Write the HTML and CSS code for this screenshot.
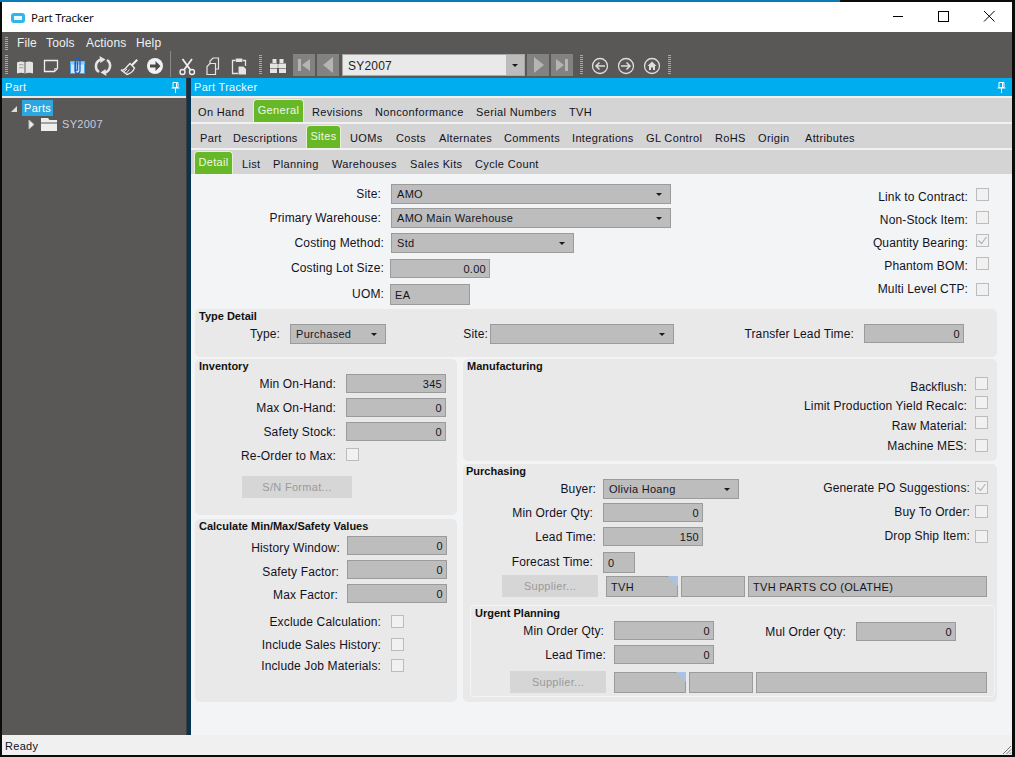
FILE: index.html
```html
<!DOCTYPE html>
<html lang="en">
<head>
<meta charset="utf-8">
<title>Part Tracker</title>
<link rel="stylesheet" href="styles.css">
</head>
<body>
<div class="window">
  <header class="titlebar">
    <span class="app-icon"></span>
    <span class="title-text">Part Tracker</span>
    <span class="win-btns">
      <svg class="win-btn" width="46" height="30" viewBox="0 0 46 30"><path d="M18 14.500h10" stroke="#000" fill="none"/></svg>
      <svg class="win-btn" width="46" height="30" viewBox="0 0 46 30"><rect x="17.500" y="9.500" width="10" height="10" stroke="#000" fill="none"/></svg>
      <svg class="win-btn" width="46" height="30" viewBox="0 0 46 30"><path d="M17 9l10.500 10.500M27.500 9L17 19.500" stroke="#000" fill="none"/></svg>
    </span>
  </header>

  <nav class="menubar">
    <span class="grip grip-menu"></span>
    <span class="menu-item m-file">File</span>
    <span class="menu-item m-tools">Tools</span>
    <span class="menu-item m-actions">Actions</span>
    <span class="menu-item m-help">Help</span>
  </nav>

  <div class="toolbar">
    <span class="grip"></span>
    <div class="tools tools-first">
      <svg class="tool" width="26" height="28" viewBox="0 0 26 28"><path d="M5 11.500q4-2 8 0q4-2 8 0v11q-4-1.500-8 0q-4-1.500-8 0z" fill="#e4e4e4"/><path d="M13 11.500v11" stroke="#595856"/><path d="M7 14q3-1 4.500 0M7 17q3-1 4.500 0" stroke="#999" fill="none"/></svg>
      <svg class="tool" width="26" height="28" viewBox="0 0 26 28"><path d="M6.500 9.500h13v8l-3 3h-10z" fill="none" stroke="#eee" stroke-width="1.300"/><path d="M16.500 20.500v-3h3" fill="none" stroke="#ccc"/></svg>
      <svg class="tool" width="26" height="28" viewBox="0 0 26 28"><rect x="6.500" y="10.500" width="14" height="12" fill="#cfe9fb" stroke="#3fa4ee"/><rect x="6.500" y="10.500" width="14" height="3" fill="#8ccaf7"/><path d="M11 11v8.500q0 3 2.500 3t2.500-3V9.500q0-2.500-2.300-2.500t-2.200 2.500v9q0 1 1 1t1-1v-8" fill="none" stroke="#1c5fc4" stroke-width="1.300"/></svg>
      <svg class="tool" width="26" height="28" viewBox="0 0 26 28"><path d="M9 21A7 7 0 0 1 11 8.500M17 9A7 7 0 0 1 15 21.500" fill="none" stroke="#e4e4e4" stroke-width="2.600"/><path d="M9.500 5l6 3.500-5 3.500zM16.500 25l-6-3.500 5-3.500z" fill="#e4e4e4"/></svg>
      <svg class="tool" width="26" height="28" viewBox="0 0 26 28"><path d="M15 13.500L20.500 8l1.500 1.500-5.500 5.500z" fill="#eee"/><path d="M14 12.500l4.500 4.500q-2 5-7.500 6.500L5 19q3 .5 4.500-1.500T14 12.500z" fill="none" stroke="#eee" stroke-width="1.300"/><path d="M8 21l3-3M10.500 22l3-3.500" stroke="#ddd"/></svg>
      <svg class="tool" width="26" height="28" viewBox="0 0 26 28"><circle cx="13" cy="15" r="8" fill="#f2f2f2"/><path d="M8 13.500h5.500V10l5 5-5 5v-3.500H8z" fill="#4a4a48"/></svg>
    </div>
    <span class="tool-sep"></span>
    <div class="tools tools-edit">
      <svg class="tool" width="26" height="28" viewBox="0 0 26 28"><circle cx="8.500" cy="21" r="2.500" fill="none" stroke="#eee" stroke-width="1.400"/><circle cx="18" cy="21" r="2.500" fill="none" stroke="#eee" stroke-width="1.400"/><path d="M10 19L18 8M16.500 19L8.500 8" stroke="#eee" stroke-width="1.800"/></svg>
      <svg class="tool" width="26" height="28" viewBox="0 0 26 28"><path d="M10 13V10l3-3h5.500v11H15" fill="none" stroke="#e4e4e4" stroke-width="1.200"/><path d="M7 15.500l3-3h5.500v11H7z" fill="none" stroke="#e4e4e4" stroke-width="1.200"/></svg>
      <svg class="tool" width="26" height="28" viewBox="0 0 26 28"><path d="M9 9.500H6.500v13H12M17 9.500h2.500V15" fill="none" stroke="#e4e4e4" stroke-width="1.300"/><rect x="9.500" y="7.500" width="7" height="3.500" rx="1" fill="#e4e4e4"/><path d="M12.500 15.500h5l2.500 2.500v5.500h-7.500z" fill="#e4e4e4"/></svg>
    </div>
    <span class="grip grip-find"></span>
    <svg class="tool tool-find" width="26" height="28" viewBox="0 0 26 28"><rect x="7.500" y="8" width="4" height="4" fill="#e4e4e4"/><rect x="14.500" y="8" width="4" height="4" fill="#e4e4e4"/><rect x="5" y="12.500" width="7" height="9.500" fill="#e4e4e4"/><rect x="14" y="12.500" width="7" height="9.500" fill="#e4e4e4"/><rect x="12" y="13" width="2" height="4" fill="#c4c4c4"/><path d="M5 17.500h7M14 17.500h7" stroke="#8a8a88"/></svg>
    <span class="nav-btn"><svg width="22" height="22" viewBox="0 0 22 22"><path d="M5 5h3v12H5zM17 5v12l-8-6z" fill="#b5b5b5"/></svg></span>
    <span class="nav-btn"><svg width="22" height="22" viewBox="0 0 22 22"><path d="M16 3v16L6 11z" fill="#b5b5b5"/></svg></span>
    <div class="combo">
      <span class="combo-text">SY2007</span>
      <span class="combo-drop"><i class="caret"></i></span>
    </div>
    <span class="nav-btn"><svg width="22" height="22" viewBox="0 0 22 22"><path d="M7 3v16l10-8z" fill="#b5b5b5"/></svg></span>
    <span class="nav-btn"><svg width="22" height="22" viewBox="0 0 22 22"><path d="M14 5h3v12h-3zM5 5v12l8-6z" fill="#b5b5b5"/></svg></span>
    <span class="grip grip-nav"></span>
    <div class="tools tools-nav">
      <svg class="tool" width="26" height="28" viewBox="0 0 26 28"><circle cx="13" cy="15" r="7.500" fill="none" stroke="#ddd" stroke-width="1.300"/><path d="M18 15H9M12.500 11.500L9 15l3.500 3.500" fill="none" stroke="#ddd" stroke-width="1.500"/></svg>
      <svg class="tool" width="26" height="28" viewBox="0 0 26 28"><circle cx="13" cy="15" r="7.500" fill="none" stroke="#ddd" stroke-width="1.300"/><path d="M8 15h9M13.500 11.500L17 15l-3.500 3.500" fill="none" stroke="#ddd" stroke-width="1.500"/></svg>
      <svg class="tool" width="26" height="28" viewBox="0 0 26 28"><circle cx="13" cy="15" r="7.500" fill="none" stroke="#ddd" stroke-width="1.300"/><path d="M8.500 15l4.500-4.500 4.500 4.500H16v4h-2v-2.500h-2V19h-2v-4z" fill="#ddd"/></svg>
    </div>
    <span class="grip grip-end"></span>
  </div>

  <div class="panes">
    <aside class="side">
      <div class="pane-head">
        <span>Part</span>
        <svg class="pin" width="9" height="11" viewBox="0 0 9 11"><path d="M2 .5h5v5H2zM.5 6h8M4.500 6v5M5.500 1v4" stroke="#fff" fill="none"/></svg>
      </div>
      <div class="side-rule"></div>
      <div class="tree">
        <div class="tree-row tree-root">
          <svg class="tw" width="8" height="8" viewBox="0 0 8 8"><path d="M7 1v6H1z" fill="#ddd"/></svg>
          <span class="tree-sel">Parts</span>
        </div>
        <div class="tree-row tree-child">
          <svg class="tw" width="7" height="11" viewBox="0 0 7 11"><path d="M1 1l5 4.500-5 4.500z" fill="#eee" stroke="#bbb"/></svg>
          <svg class="folder" width="16" height="13" viewBox="0 0 16 13"><path d="M0 0h7l1.500 2H16v2.500H0zM0 5.500h16V13H0z" fill="#eee"/></svg>
          <span class="tree-label">SY2007</span>
        </div>
      </div>
    </aside>
    <div class="splitter"></div>
    <main class="main">
      <div class="pane-head">
        <span>Part Tracker</span>
        <svg class="pin" width="9" height="11" viewBox="0 0 9 11"><path d="M2 .5h5v5H2zM.5 6h8M4.500 6v5M5.500 1v4" stroke="#fff" fill="none"/></svg>
      </div>
      <div class="tabs tabs-1">
        <span class="tab">On Hand</span><span class="tab tab-on tab-general">General</span><span class="tab">Revisions</span><span class="tab">Nonconformance</span><span class="tab">Serial Numbers</span><span class="tab">TVH</span>
      </div>
      <div class="tabs tabs-2">
        <span class="tab">Part</span><span class="tab">Descriptions</span><span class="tab tab-on tab-sites">Sites</span><span class="tab">UOMs</span><span class="tab">Costs</span><span class="tab">Alternates</span><span class="tab">Comments</span><span class="tab">Integrations</span><span class="tab">GL Control</span><span class="tab">RoHS</span><span class="tab">Origin</span><span class="tab">Attributes</span>
      </div>
      <div class="tabs tabs-3">
        <span class="tab tab-on tab-detail">Detail</span><span class="tab">List</span><span class="tab">Planning</span><span class="tab">Warehouses</span><span class="tab">Sales Kits</span><span class="tab">Cycle Count</span>
      </div>

      <section class="form">
        <div class="top">
          <div class="stack top-fields">
            <div class="row"><label class="lbl w190 gap10">Site:</label><span class="field select w280"><span>AMO</span><i class="caret"></i></span></div>
            <div class="row"><label class="lbl w190 gap10">Primary Warehouse:</label><span class="field select w280"><span>AMO Main Warehouse</span><i class="caret"></i></span></div>
            <div class="row"><label class="lbl w193 gap7">Costing Method:</label><span class="field select w183"><span>Std</span><i class="caret"></i></span></div>
            <div class="row"><label class="lbl w193 gap6 lot">Costing Lot Size:</label><span class="field num w100">0.00</span></div>
            <div class="row"><label class="lbl w193 gap6">UOM:</label><span class="field code w80">EA</span></div>
          </div>
          <div class="stack top-checks">
            <div class="row end"><label class="lbl-c">Link to Contract:</label><span class="check"></span></div>
            <div class="row end"><label class="lbl-c">Non-Stock Item:</label><span class="check"></span></div>
            <div class="row end"><label class="lbl-c">Quantity Bearing:</label><span class="check checked"><svg width="11" height="11" viewBox="0 0 11 11"><path d="M1.500 5.500l3 3 5-6.500" stroke="#b5b5b5" fill="none" stroke-width="1.200"/></svg></span></div>
            <div class="row end"><label class="lbl-c">Phantom BOM:</label><span class="check"></span></div>
            <div class="row end"><label class="lbl-c lbl-up">Multi Level CTP:</label><span class="check"></span></div>
          </div>
        </div>

        <div class="group type-group">
          <h3 class="g-title">Type Detail</h3>
          <div class="row">
            <label class="lbl w85 gap10">Type:</label><span class="field select w96"><span>Purchased</span><i class="caret"></i></span>
            <label class="lbl w102 gap2">Site:</label><span class="field select w184"><span></span><i class="caret"></i></span>
            <label class="lbl w180 gap10">Transfer Lead Time:</label><span class="field num w100">0</span>
          </div>
        </div>

        <div class="split">
          <div class="col-left">
            <div class="group inv-group">
              <h3 class="g-title">Inventory</h3>
              <div class="stack inv-rows">
                <div class="row"><label class="lbl w141 gap10">Min On-Hand:</label><span class="field num w100">345</span></div>
                <div class="row"><label class="lbl w141 gap10">Max On-Hand:</label><span class="field num w100">0</span></div>
                <div class="row"><label class="lbl w141 gap10">Safety Stock:</label><span class="field num w100">0</span></div>
                <div class="row"><label class="lbl w141 gap10 for-check">Re-Order to Max:</label><span class="check"></span></div>
                <div class="row"><button class="btn btn-sn" disabled>S/N Format...</button></div>
              </div>
            </div>
            <div class="group calc-group">
              <h3 class="g-title">Calculate Min/Max/Safety Values</h3>
              <div class="stack calc-rows">
                <div class="row"><label class="lbl w145 gap7 low">History Window:</label><span class="field num w100">0</span></div>
                <div class="row"><label class="lbl w144 gap8 low">Safety Factor:</label><span class="field num w100">0</span></div>
                <div class="row"><label class="lbl w143 gap9 low-1">Max Factor:</label><span class="field num w100">0</span></div>
                <div class="row"><label class="lbl w186 gap10 for-check-up">Exclude Calculation:</label><span class="check"></span></div>
                <div class="row"><label class="lbl w186 gap10 for-check-up">Include Sales History:</label><span class="check"></span></div>
                <div class="row"><label class="lbl w186 gap10 for-check-up">Include Job Materials:</label><span class="check"></span></div>
              </div>
            </div>
          </div>

          <div class="col-right">
            <div class="group mfg-group">
              <h3 class="g-title">Manufacturing</h3>
              <div class="stack mfg-rows">
                <div class="row end"><label class="lbl-c">Backflush:</label><span class="check"></span></div>
                <div class="row end"><label class="lbl-c">Limit Production Yield Recalc:</label><span class="check"></span></div>
                <div class="row end"><label class="lbl-c">Raw Material:</label><span class="check"></span></div>
                <div class="row end"><label class="lbl-c lbl-up">Machine MES:</label><span class="check"></span></div>
              </div>
            </div>
            <div class="group pur-group">
              <h3 class="g-title title-tight">Purchasing</h3>
              <div class="pur-upper">
                <div class="stack pur-rows">
                  <div class="row"><label class="lbl w133 gap7">Buyer:</label><span class="field select w136"><span>Olivia Hoang</span><i class="caret"></i></span></div>
                  <div class="row"><label class="lbl w130 gap10">Min Order Qty:</label><span class="field num w100">0</span></div>
                  <div class="row"><label class="lbl w133 gap7">Lead Time:</label><span class="field num w100">150</span></div>
                  <div class="row"><label class="lbl w130 gap10">Forecast Time:</label><span class="field code w32">0</span></div>
                </div>
                <div class="stack pur-checks">
                  <div class="row end"><label class="lbl-c lbl-near">Generate PO Suggestions:</label><span class="check checked"><svg width="11" height="11" viewBox="0 0 11 11"><path d="M1.500 5.500l3 3 5-6.500" stroke="#b5b5b5" fill="none" stroke-width="1.200"/></svg></span></div>
                  <div class="row end"><label class="lbl-c lbl-near">Buy To Order:</label><span class="check"></span></div>
                  <div class="row end"><label class="lbl-c lbl-near lbl-up">Drop Ship Item:</label><span class="check"></span></div>
                </div>
              </div>
              <div class="row supplier-row">
                <button class="btn btn-sup" disabled>Supplier...</button>
                <span class="field code w72 corner">TVH</span>
                <span class="field code w64"></span>
                <span class="field code w239">TVH PARTS CO (OLATHE)</span>
              </div>
              <div class="urgent">
                <h3 class="g-title">Urgent Planning</h3>
                <div class="stack urg-rows">
                  <div class="row">
                    <label class="lbl w133 gap10">Min Order Qty:</label><span class="field num w100">0</span>
                    <label class="lbl w132 gap10 drop1">Mul Order Qty:</label><span class="field num w100 drop1">0</span>
                  </div>
                  <div class="row"><label class="lbl w135 gap8">Lead Time:</label><span class="field num w100">0</span></div>
                  <div class="row urg-sup">
                    <button class="btn btn-sup" disabled>Supplier...</button>
                    <span class="field code w72 corner"></span>
                    <span class="field code w64"></span>
                    <span class="field code w231"></span>
                  </div>
                </div>
              </div>
            </div>
          </div>
        </div>
      </section>
    </main>
  </div>

  <footer class="status">
    <span class="status-text">Ready</span>
    <svg class="resize" width="12" height="12" viewBox="0 0 12 12"><path d="M11 3l-8 8M11 6.500L6.500 11M11 9.500L9.500 11" stroke="#777" fill="none"/></svg>
  </footer>
</div>
</body>
</html>
```

FILE: styles.css
```css
* { box-sizing: border-box; }
html, body { margin: 0; height: 100%; overflow: hidden; }
body {
  background: linear-gradient(#0a7bb5, #0a7bb5) 0 0 / 840px 2px no-repeat, #0b0b0b;
  font: 12px/16px "Liberation Sans", Arial, sans-serif;
  letter-spacing: .14px;
  color: #12121e;
}
.window {
  margin: 2px 3px 2px 2px;
  height: 753px;
  display: flex;
  flex-direction: column;
}

/* title bar */
.titlebar {
  height: 30px;
  background: #fff;
  display: flex;
  align-items: center;
  flex: none;
}
.app-icon {
  width: 14px;
  height: 10px;
  margin: 1px 0 0 9px;
  border: 3px solid #2fb6ea;
  border-radius: 3px;
  background: #e9f7fd;
}
.title-text {
  margin-left: 6px;
  font: 11.5px "Noto Sans", sans-serif;
  letter-spacing: -.2px;
  color: #111;
}
.win-btns { margin-left: auto; display: flex; margin-right: -1px; }
.win-btn { display: block; }

/* menu + toolbar */
.menubar {
  height: 18px;
  flex: none;
  background: #595856;
  display: flex;
  align-items: center;
  color: #f0f0f0;
  padding-top: 4px;
}
.menu-item { display: block; }
.m-file { margin-left: 9px; width: 29px; }
.m-tools { width: 40px; }
.m-actions { width: 50px; }
.grip {
  flex: none;
  width: 3px;
  height: 20px;
  margin-left: 3px;
  background: repeating-linear-gradient(#a8a8a6 0 1px, transparent 1px 2px);
}
.grip-menu { height: 13px; }
.toolbar {
  height: 28px;
  flex: none;
  background: #595856;
  display: flex;
  align-items: center;
  padding-top: 2px;
}
.tools { display: flex; flex: none; }
.tool { display: block; flex: none; margin-top: -1px; }
.tools-first { margin-left: 4px; }
.tool-sep { width: 1px; height: 26px; margin: -2px 3px 0 2px; background: #8a8a88; flex: none; }
.grip-find { margin-left: 7px; }
.tool-find { margin-left: 3px; }
.nav-btn {
  flex: none;
  width: 22px;
  height: 22px;
  margin-left: 2px;
  background: #828280;
  display: block;
}
.nav-btn svg { display: block; }
.combo {
  flex: none;
  width: 183px;
  height: 22px;
  margin-left: 3px;
  border: 1px solid #a8a8a8;
  background: #e9e9e9;
  display: flex;
  align-items: center;
}
.combo-text { flex: 1; padding: 1px 0 0 5px; color: #222; letter-spacing: .2px; }
.combo-drop {
  width: 18px;
  height: 20px;
  background: #bcbcbc;
  display: flex;
  align-items: center;
  justify-content: center;
}
.caret {
  display: block;
  flex: none;
  width: 0;
  height: 0;
  border: 3px solid transparent;
  border-top: 3px solid #1a1a1a;
  border-bottom: 0;
}
.grip-nav { margin-left: 7px; }
.tools-nav { margin-left: 4px; }
.grip-end { margin-left: 3px; }

/* panes */
.panes { height: 657px; flex: none; display: flex; }
.side { width: 184px; flex: none; background: #595856; }
.splitter {
  width: 5px;
  flex: none;
  background: linear-gradient(90deg, #3d3d3c 0 1px, #0a3352 1px);
}
.main { width: 821px; flex: none; display: flex; flex-direction: column; background: #f1f1f1; }
.pane-head {
  height: 18px;
  flex: none;
  background: #00adef;
  color: #f3fbff;
  display: flex;
  align-items: center;
  justify-content: space-between;
  padding: 0 6px 0 3px;
  font-size: 11px;
  letter-spacing: .3px;
}
.pin { display: block; }
.side-rule { height: 2px; background: #e8e8e8; }
.tree { padding-top: 1px; color: #fff; font-size: 11px; letter-spacing: .3px; }
.tree-row { display: flex; align-items: center; }
.tree-root { height: 17px; }
.tree-root .tw { margin-left: 8px; margin-top: 2px; }
.tree-sel {
  margin-left: 4px;
  width: 31px;
  height: 16px;
  padding-left: 2px;
  background: #2ba6df;
}
.tree-child { height: 14px; margin-top: 1px; }
.tree-child .tw { margin-left: 26px; }
.folder { margin-left: 6px; }
.tree-label { margin: -1px 0 0 5px; color: #c6cbdc; }

/* tabs */
.tabs {
  height: 24px;
  flex: none;
  margin-top: 2px;
  background: #d4d4d4;
  display: grid;
  align-items: start;
  font-size: 11px;
  letter-spacing: .35px;
}
.tabs-1 { padding-left: 7px; grid-template-columns: 55px 59px 63px 101px 93px 1fr; }
.tabs-2 { padding-left: 9px; grid-template-columns: 33px 73px 44px 46px 43px 65px 68px 74px 69px 43px 47px 1fr; }
.tabs-3 { padding-left: 3px; grid-template-columns: 48px 31px 59px 78px 65px 1fr; }
.tab { display: block; line-height: 28px; white-space: nowrap; }
.tab-on {
  margin-top: 1px;
  height: 23px;
  line-height: 20px;
  background: #67b826;
  color: #eef8e4;
  text-align: center;
  border: 1px solid #e4f0d8;
  border-bottom: 0;
  border-radius: 4px 4px 0 0;
}
.tab-general { width: 51px; }
.tab-sites { width: 35px; }
.tab-detail { width: 39px; }

/* form */
.form {
  flex: 1;
  background: #f3f4f6;
  padding-left: 4px;
}
.top { height: 135px; width: 802px; display: flex; justify-content: space-between; }
.row { display: flex; align-items: flex-start; }
.row.end { justify-content: flex-end; }
.stack { display: grid; }
.top-fields { margin-left: -4px; padding-top: 10px; grid-template-rows: 24px 25px 26px 25px 21px; align-content: start; }
.top-checks { padding-top: 14px; padding-right: 8px; grid-template-rows: 23px 23px 23px 26px 13px; align-content: start; }

.lbl { display: block; flex: none; text-align: right; line-height: 21px; white-space: nowrap; }
.lbl.lot { line-height: 18px; }
.lbl.for-check { line-height: 17px; }
.lbl.for-check-up { line-height: 15px; }
.lbl.low { line-height: 25px; }
.lbl.low-1 { line-height: 23px; }
.drop1 { margin-top: 1px; }
.lbl-c { display: block; line-height: 17px; margin-right: 8px; margin-top: 1px; white-space: nowrap; }
.lbl-c.lbl-near { margin-right: 5px; margin-top: -1px; }
.lbl-c.lbl-up { margin-top: -2px; }
.mfg-rows .lbl-c { margin-top: 2px; }
.mfg-rows .lbl-c.lbl-up { margin-top: -1px; }

.w85 { width: 85px; } .w102 { width: 102px; } .w130 { width: 130px; } .w132 { width: 132px; }
.w133 { width: 133px; } .w135 { width: 135px; } .w141 { width: 141px; } .w143 { width: 143px; }
.w144 { width: 144px; } .w145 { width: 145px; } .w180 { width: 180px; } .w186 { width: 186px; }
.w190 { width: 190px; } .w193 { width: 193px; }
.gap2 { margin-right: 2px; } .gap6 { margin-right: 6px; } .gap7 { margin-right: 7px; }
.gap8 { margin-right: 8px; } .gap9 { margin-right: 9px; } .gap10 { margin-right: 10px; }

.field {
  display: flex;
  flex: none;
  align-items: center;
  height: 19px;
  padding: 0 5px;
  background: #bdbdbd;
  border: 1px solid #9b9b9b;
  white-space: nowrap;
  font-size: 11px;
  letter-spacing: .3px;
  color: #15151f;
}
.select { height: 20px; justify-content: space-between; padding-right: 8px; }
.num { justify-content: flex-end; padding-right: 3px; }
.code { height: 21px; padding-left: 4px; }
.corner::after {
  content: "";
  flex: none;
  width: 10px;
  height: 10px;
  margin: -1px -6px auto auto;
  background: #a9c3e4;
  clip-path: polygon(0 0, 100% 0, 100% 100%);
}
.w32 { width: 32px; } .w64 { width: 64px; } .w72 { width: 72px; } .w80 { width: 80px; }
.w96 { width: 96px; } .w100 { width: 100px; } .w136 { width: 136px; } .w183 { width: 183px; }
.w184 { width: 184px; } .w231 { width: 231px; } .w239 { width: 239px; } .w280 { width: 280px; }

.check {
  display: flex;
  flex: none;
  align-items: center;
  justify-content: center;
  width: 13px;
  height: 13px;
  background: #f1f1f1;
  border: 1px solid #bcbcbc;
}
.btn {
  display: block;
  flex: none;
  height: 22px;
  padding: 0;
  border: 0;
  background: #d6d6d6;
  color: #9a9a9a;
  font: inherit;
  letter-spacing: .3px;
  font-size: 11px;
}
.btn-sn { width: 110px; margin-left: 47px; }
.btn-sup { width: 96px; margin-left: 39px; margin-right: 8px; }

.group { background: #e9e9e9; border-radius: 5px; }
.g-title {
  margin: 0;
  height: 15px;
  padding-left: 4px;
  font-size: 11px;
  line-height: 15px;
  font-weight: 700;
  letter-spacing: 0;
  color: #111;
}
.title-tight { padding-left: 3px; }
.type-group { width: 802px; height: 48px; }
.split { display: flex; gap: 6px; margin-top: 2px; width: 802px; }
.col-left { width: 262px; flex: none; display: flex; flex-direction: column; gap: 4px; }
.col-right { width: 534px; flex: none; display: flex; flex-direction: column; gap: 3px; }
.inv-group { height: 156px; }
.inv-rows { grid-template-rows: 24px 24px 26px 28px 22px; }
.calc-group { height: 183px; }
.calc-rows { padding-top: 2px; grid-template-rows: 24px 24px 31px 23px 21px 13px; }
.mfg-group { height: 102px; }
.mfg-rows { padding: 3px 9px 0 0; grid-template-rows: 19px 20px 23px 13px; }
.pur-group { height: 238px; }
.pur-upper { height: 96px; display: flex; justify-content: space-between; }
.pur-rows { grid-template-rows: 24px 24px 25px 21px; align-content: start; }
.pur-checks { padding: 2px 9px 0 0; grid-template-rows: 24px 25px 13px; align-content: start; }
.supplier-row { gap: 3px; }
.supplier-row .btn-sup { margin-right: 5px; }
.supplier-row .field, .urg-sup .field { margin-top: 1px; }
.urgent {
  margin: 8px 0 0 7px;
  width: 525px;
  height: 92px;
  border: 1px solid #f3f4f6;
  border-radius: 4px;
}
.urg-rows { grid-template-rows: 24px 26px 22px; }
.urg-sup { gap: 3px; }
.urg-sup .btn-sup { margin-right: 5px; }

/* status */
.status {
  height: 20px;
  flex: none;
  background: #f0f0f0;
  display: flex;
  align-items: center;
  justify-content: space-between;
  padding-left: 3px;
  font-size: 11px;
  letter-spacing: .3px;
}
.status-text { padding-top: 2px; }
.resize { align-self: flex-end; }
```
